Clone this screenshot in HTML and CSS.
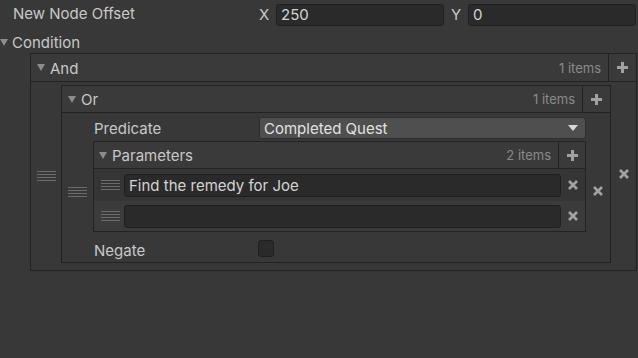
FILE: index.html
```html
<!DOCTYPE html>
<html lang="en">
<head>
  <meta charset="UTF-8"/>
  <title>Inspector - Quest Node</title>
  <link rel="stylesheet" href="styles.css">
</head>
<body>
  <div class="inspector">
    <div class="offset-row">
      <span class="label">New Node Offset</span>
      <div class="vector">
        <span class="axis">X</span>
        <div class="input">250</div>
        <span class="axis">Y</span>
        <div class="input">0</div>
      </div>
    </div>

    <div class="foldout"><span class="tri"></span>Condition</div>

    <div class="list and-list">
      <div class="list-header">
        <span class="tri"></span>
        <span class="title">And</span>
        <span class="count">1 items</span>
        <div class="add">
          <svg width="13" height="13" viewBox="0 0 13 13"><path d="M6.5 1v11M1 6.5h11" stroke="currentColor" stroke-width="3"/></svg>
        </div>
      </div>
      <div class="list-body">
        <div class="element">
          <div class="handle-col"><div class="handle"></div></div>

          <div class="list or-list">
            <div class="list-header">
              <span class="tri"></span>
              <span class="title">Or</span>
              <span class="count">1 items</span>
              <div class="add">
                <svg width="13" height="13" viewBox="0 0 13 13"><path d="M6.5 1v11M1 6.5h11" stroke="currentColor" stroke-width="3"/></svg>
              </div>
            </div>
            <div class="list-body">
              <div class="element">
                <div class="handle-col"><div class="handle"></div></div>

                <div class="predicate">
                  <div class="field-row">
                    <span class="label">Predicate</span>
                    <div class="dropdown">
                      <span>Completed Quest</span>
                      <svg width="10" height="6" viewBox="0 0 10 6"><path d="M0 0h10L5 6z" fill="currentColor"/></svg>
                    </div>
                  </div>

                  <div class="list params-list">
                    <div class="list-header">
                      <span class="tri"></span>
                      <span class="title">Parameters</span>
                      <span class="count">2 items</span>
                      <div class="add">
                        <svg width="13" height="13" viewBox="0 0 13 13"><path d="M6.5 1v11M1 6.5h11" stroke="currentColor" stroke-width="3"/></svg>
                      </div>
                    </div>
                    <div class="params-body">
                      <div class="param first">
                        <div class="handle"></div>
                        <div class="input text">Find the remedy for Joe</div>
                        <div class="remove">
                          <svg width="10" height="10" viewBox="0 0 10 10"><path d="M1 1l8 8M9 1l-8 8" stroke="currentColor" stroke-width="2.6"/></svg>
                        </div>
                      </div>
                      <div class="param">
                        <div class="handle"></div>
                        <div class="input text"></div>
                        <div class="remove">
                          <svg width="10" height="10" viewBox="0 0 10 10"><path d="M1 1l8 8M9 1l-8 8" stroke="currentColor" stroke-width="2.6"/></svg>
                        </div>
                      </div>
                    </div>
                  </div>

                  <div class="field-row negate-row">
                    <span class="label">Negate</span>
                    <div class="checkbox"></div>
                  </div>
                </div>

                <div class="remove-col">
                  <svg width="10" height="10" viewBox="0 0 10 10"><path d="M1 1l8 8M9 1l-8 8" stroke="currentColor" stroke-width="2.6"/></svg>
                </div>
              </div>
            </div>
          </div>

          <div class="remove-col and-remove">
            <svg width="10" height="10" viewBox="0 0 10 10"><path d="M1 1l8 8M9 1l-8 8" stroke="currentColor" stroke-width="2.6"/></svg>
          </div>
        </div>
      </div>
    </div>
  </div>
</body>
</html>
```

FILE: styles.css
```css
:root {
  --bg: #383838;
  --header: #3a3a3a;
  --border: #232323;
  --field: #2a2a2a;
  --field-border: #1f1f1f;
  --text: #c8c8c8;
  --muted: #8a8a8a;
  --icon: #a2a2a2;
}

body {
  margin: 0;
  background: var(--bg);
  color: var(--text);
  font-family: Inter, 'Noto Sans', sans-serif;
  font-size: 15px;
}

.inspector {
  padding-top: 4px;
  width: 638px;
}

.offset-row {
  display: flex;
  align-items: center;
  height: 22px;
  padding-left: 13px;
}

.offset-row .label {
  width: 246px;
  margin-top: -3px;
}

.vector {
  display: flex;
  align-items: center;
}

.axis {
  width: 17px;
  margin-top: -2px;
}

.input {
  box-sizing: border-box;
  height: 22px;
  width: 168px;
  background: var(--field);
  border: 1px solid var(--field-border);
  border-radius: 3px;
  color: #d4d4d4;
  padding: 0 4px;
  line-height: 20px;
}

.vector .input:nth-child(2) {
  margin-right: 7px;
}

.tri {
  width: 0;
  height: 0;
  border-left: 4.5px solid transparent;
  border-right: 4.5px solid transparent;
  border-top: 7px solid #8c8c8c;
  margin-right: 5px;
}

.foldout {
  display: flex;
  align-items: center;
  height: 22px;
  margin-top: 5px;
}

.foldout .tri {
  margin-right: 4px;
}

.list {
  border: 1px solid var(--border);
  box-sizing: border-box;
}

.and-list {
  margin-left: 30px;
  width: 607px;
}

.list-header {
  display: flex;
  align-items: center;
  height: 27px;
  background: var(--header);
  border-bottom: 1px solid var(--border);
  padding-left: 6px;
}

.list-header .title {
  flex: 1;
  padding-top: 1px;
}

.count {
  color: var(--muted);
  font-size: 13px;
  margin-right: 7px;
}

.add {
  align-self: stretch;
  width: 27px;
  border-left: 1px solid var(--border);
  display: flex;
  align-items: center;
  justify-content: center;
  color: var(--icon);
}

.list-body {
  padding: 3px 0 7px;
}

.element {
  display: flex;
  align-items: center;
}

.handle-col {
  width: 30px;
  display: flex;
  justify-content: center;
  padding-top: 4px;
}

.handle {
  width: 19px;
  height: 10px;
  background: repeating-linear-gradient(to bottom, #6c6c6c 0 1px, transparent 1px 3px);
}

.or-list {
  width: 550px;
}

.or-list .list-header {
  height: 26px;
}

.or-list .list-body {
  padding: 4px 0 0;
}

.or-list .handle-col {
  width: 31px;
}

.remove-col {
  width: 24px;
  display: flex;
  justify-content: center;
  color: var(--icon);
  padding-top: 3px;
}

.and-remove {
  width: 25px;
  padding-top: 0;
}

.predicate {
  width: 493px;
}

.field-row {
  display: flex;
  align-items: center;
  height: 22px;
}

.field-row .label {
  width: 165px;
  padding-left: 1px;
}

.dropdown {
  flex: 1;
  box-sizing: border-box;
  height: 22px;
  background: #4f4f4f;
  border: 1px solid #2e2e2e;
  border-radius: 3px;
  display: flex;
  align-items: center;
  justify-content: space-between;
  padding: 0 7px 0 4px;
  color: #e2e2e2;
}

.dropdown svg {
  color: #d8d8d8;
}

.params-list {
  margin-top: 2px;
}

.params-list .list-header {
  height: 26px;
  padding-left: 5px;
}

.params-list .add {
  width: 26px;
}

.param {
  display: flex;
  align-items: center;
  height: 30px;
  background: #3b3b3b;
}

.param.first {
  height: 32px;
  background: #353535;
}

.param .handle {
  margin: 0 4px 0 7px;
}

.input.text {
  flex: 1;
  width: auto;
  height: 23px;
  line-height: 21px;
}

.remove {
  width: 24px;
  display: flex;
  justify-content: center;
  color: var(--icon);
}

.negate-row {
  height: 27px;
  padding-top: 3px;
}

.negate-row .label {
  padding-top: 3px;
}

.checkbox {
  box-sizing: border-box;
  width: 16px;
  height: 17px;
  margin-left: -1px;
  background: var(--field);
  border: 1px solid var(--field-border);
  border-radius: 3px;
}
```
